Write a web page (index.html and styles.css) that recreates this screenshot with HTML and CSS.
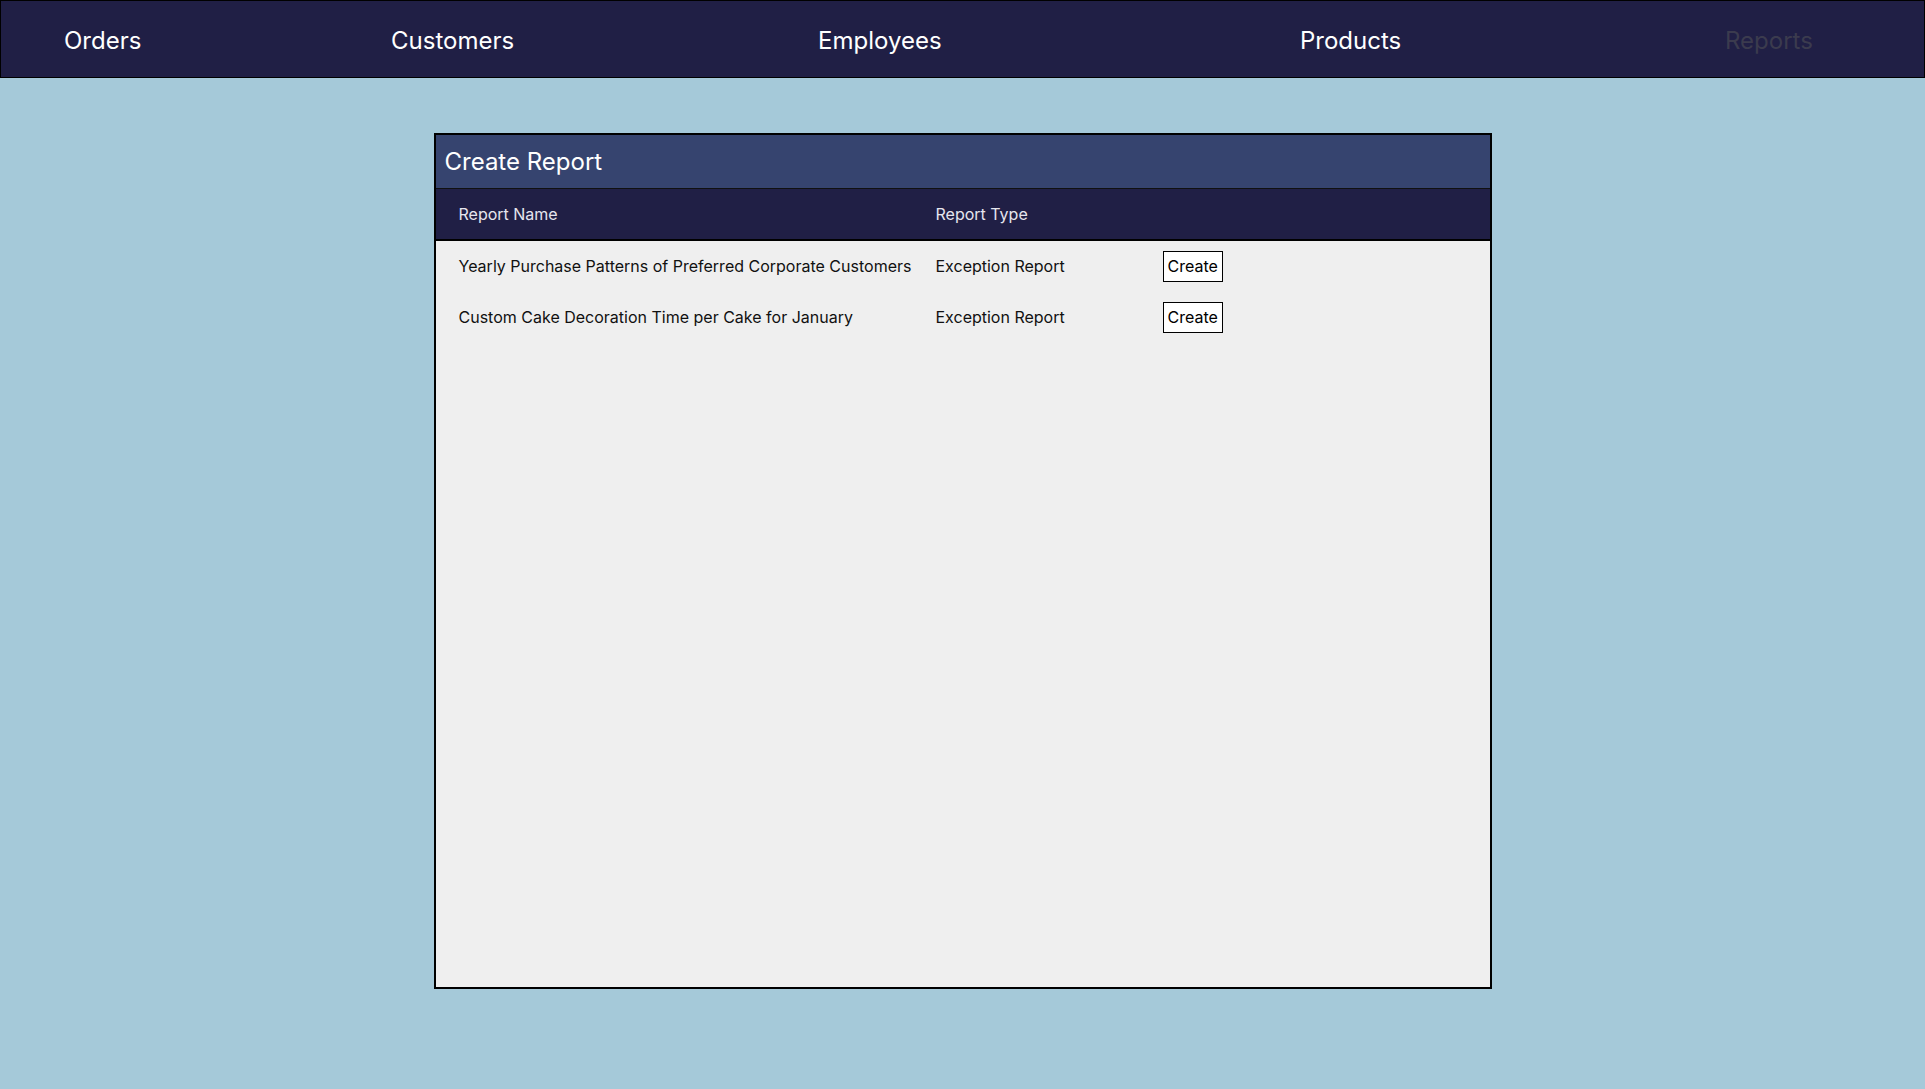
FILE: index.html
```html
<!DOCTYPE html>
<html>
<head>
<meta charset="utf-8">
<link rel="stylesheet" href="styles.css">
</head>
<body>
<nav class="nav">
  <a class="nav-item">Orders</a>
  <a class="nav-item">Customers</a>
  <a class="nav-item">Employees</a>
  <a class="nav-item">Products</a>
  <a class="nav-item nav-active">Reports</a>
</nav>
<main class="main">
  <section class="card">
    <div class="card-title">Create Report</div>
    <div class="row row-head">
      <div class="cell">Report Name</div>
      <div class="cell">Report Type</div>
      <div class="cell"></div>
    </div>
    <div class="rows">
      <div class="row">
        <div class="cell">Yearly Purchase Patterns of Preferred Corporate Customers</div>
        <div class="cell">Exception Report</div>
        <div class="cell"><button class="btn">Create</button></div>
      </div>
      <div class="row">
        <div class="cell">Custom Cake Decoration Time per Cake for January</div>
        <div class="cell">Exception Report</div>
        <div class="cell"><button class="btn">Create</button></div>
      </div>
    </div>
  </section>
</main>
</body>
</html>
```

FILE: styles.css
```css
* { box-sizing: border-box; }
html, body {
  margin: 0;
  padding: 0;
  background: #a5c9d9;
  font-family: Inter, "Noto Sans", sans-serif;
  height: 100%;
}
.nav {
  height: 78px;
  background: #201f45;
  border: 1px solid #000;
  display: grid;
  grid-template-columns: 327px 427px 482px 425px 1fr;
  align-items: center;
  padding-left: 63px;
}
.nav-item {
  color: #ffffff;
  font-size: 24px;
  line-height: 28px;
  padding-top: 3px;
  white-space: nowrap;
}
.nav-active { color: #3b3b4e; }
.main {
  display: flex;
  justify-content: center;
  padding-top: 55px;
}
.card {
  width: 1058px;
  height: 856px;
  border: 2px solid #000;
  background: #efefef;
  display: flex;
  flex-direction: column;
}
.card-title {
  height: 54px;
  background: #36446f;
  border-bottom: 1px solid #111;
  color: #fff;
  font-size: 24px;
  display: flex;
  align-items: center;
  padding-left: 9px;
}
.row {
  display: grid;
  grid-template-columns: 477px 227px 1fr;
  align-items: center;
  height: 50px;
  font-size: 16px;
  color: #111;
}
.rows .row + .row {
  margin-top: 1px;
}
.row-head {
  height: 52px;
  background: #201f45;
  color: #e6e6ee;
  border-bottom: 2px solid #000;
}
.cell {
  padding-left: 23px;
  white-space: nowrap;
}
.btn {
  font-family: Inter, "Noto Sans", sans-serif;
  font-size: 16px;
  color: #000;
  background: #fff;
  border: 1px solid #000;
  border-radius: 0;
  padding: 0 4px;
  height: 31px;
  width: 60px;
}
```
